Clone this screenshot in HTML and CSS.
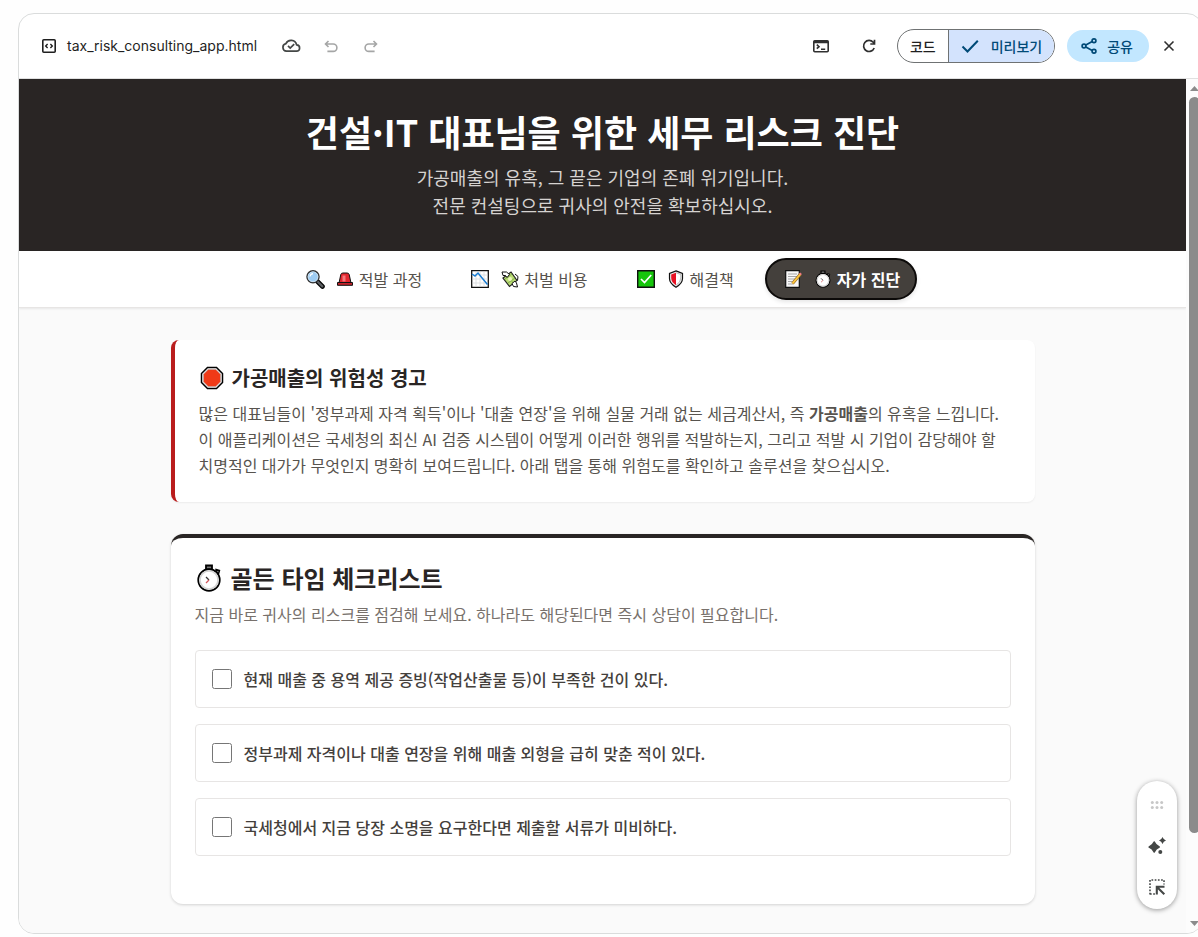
FILE: index.html
```html
<!DOCTYPE html>
<html lang="ko">
<head>
<meta charset="utf-8">
<title>tax_risk_consulting_app.html</title>
<link rel="stylesheet" href="styles.css">
</head>
<body>
<svg class="defs" aria-hidden="true">
  <symbol id="stopwatch" viewBox="0 0 24 28">
    <path d="M9 1.500h6v4H9z" fill="#777" stroke="#000" stroke-width="1.800"/>
    <path d="M19 5.500l3.500 1-1 3.500-2.500-2z" fill="#777" stroke="#000" stroke-width="1.400"/>
    <circle cx="12" cy="16" r="10.800" fill="#f4f4f4" stroke="#000" stroke-width="1.700"/>
    <circle cx="12" cy="16" r="9" fill="#fff" stroke="#d4d4d4" stroke-width="1.600"/>
    <path d="M9 13l3 3" fill="none" stroke="#333" stroke-width="1.300"/>
    <path d="M12 16l-3 3" fill="none" stroke="#d2585e" stroke-width="1.200"/>
  </symbol>
</svg>
<div class="frame">
  <div class="toolbar">
    <div class="toolbar-group">
      <svg class="icon-16 file-icon" viewBox="0 0 16 16" fill="none" stroke="#1f1f1f" stroke-width="1.600"><rect x="1.800" y="1.800" width="12.400" height="12.400" rx="1"/><path d="M6.600 6L4.700 8l1.900 2M9.400 6l1.900 2-1.900 2" stroke-width="1.400"/></svg>
      <span class="filename">tax_risk_consulting_app.html</span>
      <svg class="cloud" viewBox="0 0 20 16" fill="none" stroke="#444746" stroke-width="1.700"><path d="M5.500 13.200h9.700a3.200 3.200 0 0 0 .4-6.400A5.700 5.700 0 0 0 4.900 5.700a3.800 3.800 0 0 0 .6 7.500z"/><path d="M7 7.900l2.200 2.200 4-4"/></svg>
      <button class="icon-button" aria-label="실행취소" disabled><svg class="icon-16" viewBox="0 0 16 16" fill="none" stroke="#a5a6a6" stroke-width="1.600"><path d="M5.500 3L2.500 6l3 3M2.800 6h7.400a3.700 3.700 0 0 1 0 7.400H4.400"/></svg></button>
      <button class="icon-button" aria-label="다시실행" disabled><svg class="icon-16" viewBox="0 0 16 16" fill="none" stroke="#a5a6a6" stroke-width="1.600"><path d="M10.500 3l3 3-3 3M13.200 6H5.800a3.700 3.700 0 0 0 0 7.400h5.800"/></svg></button>
    </div>
    <div class="toolbar-group actions">
      <button class="icon-button" aria-label="콘솔"><svg class="icon-18" viewBox="0 0 18 18" fill="none" stroke="#303030" stroke-width="1.600"><rect x="1.800" y="3.800" width="14.400" height="11" rx="1"/><path d="M1.800 5h14.400" stroke-width="2.400"/><path d="M4.800 7.700l2.200 2-2.200 2M9 12.200h4.200"/></svg></button>
      <button class="icon-button" aria-label="새로고침"><svg class="icon-18" viewBox="0 0 18 18" fill="none" stroke="#303030" stroke-width="1.700"><path d="M14.200 11a5.500 5.500 0 1 1-1-5.700l1.600 1.700M14.500 2.800V7h-4.200"/></svg></button>
      <div class="segment">
        <button class="segment-button">코드</button>
        <button class="segment-button selected"><svg class="check" viewBox="0 0 18 14" fill="none" stroke="#004a77" stroke-width="2"><path d="M1.500 7.500l5 5L16.800 1.800"/></svg>미리보기</button>
      </div>
      <button class="share"><svg class="icon-18" viewBox="0 0 18 18" fill="none" stroke="#004a77" stroke-width="1.700"><circle cx="14" cy="3.700" r="1.900"/><circle cx="14" cy="14.300" r="1.900"/><circle cx="4" cy="9" r="1.900"/><path d="M5.800 8l6.400-3.400M5.800 10l6.400 3.400"/></svg>공유</button>
      <button class="icon-button close" aria-label="닫기"><svg class="icon-16" viewBox="0 0 16 16" stroke="#303030" stroke-width="1.600"><path d="M3.500 3.500l9 9M12.500 3.500l-9 9"/></svg></button>
    </div>
  </div>
  <div class="viewport">
    <div class="page">
      <header class="hero">
        <h1>건설·IT 대표님을 위한 세무 리스크 진단</h1>
        <p>가공매출의 유혹, 그 끝은 기업의 존폐 위기입니다.<br>전문 컨설팅으로 귀사의 안전을 확보하십시오.</p>
      </header>
      <nav class="tabs">
        <button class="tab">
          <svg class="emoji" viewBox="0 0 20 20"><path d="M12.500 12.500l5 5" stroke="#000" stroke-width="4.600" stroke-linecap="round"/><path d="M13 13l4.300 4.300" stroke="#5c5f63" stroke-width="2.400" stroke-linecap="round"/><circle cx="8" cy="7.800" r="6" fill="#9dccf3" stroke="#333" stroke-width="1.500"/><circle cx="8" cy="7.800" r="4.900" fill="#9dccf3" stroke="#c9dff0" stroke-width="1"/><path d="M5 7.500A3.500 3.500 0 0 1 8 4.600" fill="none" stroke="#fff" stroke-width="1.200"/></svg>
          <span class="tab-label"><svg class="emoji-small" viewBox="0 0 18 18"><path d="M3 13l1.800-8.500Q5.200 3 7 3h4q1.800 0 2.200 1.500L15 13z" fill="#e3262f" stroke="#111" stroke-width="1"/><path d="M6.500 5.500h3v6h-3z" fill="#f4777b"/><path d="M1.500 12.500h15v2.800h-15z" fill="#c4222a" stroke="#111" stroke-width="1"/></svg>적발 과정</span>
        </button>
        <button class="tab">
          <svg class="emoji" viewBox="0 0 20 20"><path d="M1.700 1.700h16.600v16.600H1.700z" fill="#fff" stroke="#111" stroke-width="1.300"/><path d="M6 2.500v15M10 2.500v15M14 2.500v15M2.500 6h15M2.500 10h15M2.500 14h15" stroke="#d5d9dd" stroke-width=".8"/><path d="M2 5l3 2 3-3 9.500 11.500" fill="none" stroke="#187bd1" stroke-width="1.500"/></svg>
          <span class="tab-label"><svg class="emoji-small" viewBox="0 0 18 18"><path d="M2 8L10 2l6 8.500-7.500 6z" fill="#b9dc73" stroke="#222" stroke-width="1.200"/><path d="M6 5l6.500 8.500M4 9l7-5M7 13l7-5" stroke="#7fa648" stroke-width=".9"/><circle cx="9" cy="9" r="2" fill="#edf7bd"/><path d="M1 2h4.500l3 2.500L6 7.500 4.500 5.500H2zM16.500 17l-4-.5-1.500-3 3-2.500 1.500 2zM14 4l3 2.500-.5 4" fill="#fff" stroke="#111" stroke-width="1"/></svg>처벌 비용</span>
        </button>
        <button class="tab">
          <svg class="emoji" viewBox="0 0 20 20"><path d="M1.700 1.700h16.600v16.600H1.700z" fill="#16c60c" stroke="#111" stroke-width="1.400"/><path d="M5 10l3.500 3.500L15.200 6" fill="none" stroke="#fff" stroke-width="1.700"/></svg>
          <span class="tab-label"><svg class="emoji-small" viewBox="0 0 18 18"><path d="M9 .9l6.500 2.600v5q0 5-6.500 8.700-6.500-3.700-6.500-8.700v-5z" fill="#eee" stroke="#111" stroke-width="1.200"/><path d="M9 2.700v12.500Q4.200 12.200 4.200 8V4.500z" fill="#e81224"/><path d="M9 2.700l4.800 1.800V8q0 4.200-4.800 7.200" fill="#fff" stroke="#aaa" stroke-width=".8"/></svg>해결책</span>
        </button>
        <button class="tab active">
          <svg class="emoji" viewBox="0 0 20 20"><path d="M2.700 1.700h13.600v16.600H2.700z" fill="#f8f8f8" stroke="#111" stroke-width="1.200"/><path d="M5 5h9M5 7.500h9M5 10h7M5 12.500h4M5 15h5" stroke="#a5a5a5" stroke-width="1"/><path d="M9.500 14.500L17.500 5" stroke="#916727" stroke-width="3"/><path d="M9.500 14.500L17.500 5" stroke="#ffc83d" stroke-width="1.900"/><path d="M16.800 5.500l1.200-1.300" stroke="#f37b83" stroke-width="2.300"/></svg>
          <span class="tab-label"><svg class="emoji-small"><use href="#stopwatch"/></svg>자가 진단</span>
        </button>
      </nav>
      <main class="content">
        <section class="card warning">
          <h2><svg class="stop" viewBox="0 0 26 26"><path d="M8.500 2.500h9l6 6v9l-6 6h-9l-6-6v-9z" fill="#fff" stroke="#000" stroke-width="1.500"/><path d="M9.200 4.300h7.600l4.900 4.900v7.600l-4.900 4.900H9.200l-4.900-4.900V9.200z" fill="#f03a17" stroke="#bcbcbc" stroke-width=".8"/></svg>가공매출의 위험성 경고</h2>
          <p>많은 대표님들이 '정부과제 자격 획득'이나 '대출 연장'을 위해 실물 거래 없는 세금계산서, 즉 <strong>가공매출</strong>의 유혹을 느낍니다. 이 애플리케이션은 국세청의 최신 AI 검증 시스템이 어떻게 이러한 행위를 적발하는지, 그리고 적발 시 기업이 감당해야 할 치명적인 대가가 무엇인지 명확히 보여드립니다. 아래 탭을 통해 위험도를 확인하고 솔루션을 찾으십시오.</p>
        </section>
        <section class="card checklist">
          <h2><svg class="watch"><use href="#stopwatch"/></svg>골든 타임 체크리스트</h2>
          <p>지금 바로 귀사의 리스크를 점검해 보세요. 하나라도 해당된다면 즉시 상담이 필요합니다.</p>
          <div class="questions">
            <label class="question"><input type="checkbox"><span>현재 매출 중 용역 제공 증빙(작업산출물 등)이 부족한 건이 있다.</span></label>
            <label class="question"><input type="checkbox"><span>정부과제 자격이나 대출 연장을 위해 매출 외형을 급히 맞춘 적이 있다.</span></label>
            <label class="question"><input type="checkbox"><span>국세청에서 지금 당장 소명을 요구한다면 제출할 서류가 미비하다.</span></label>
          </div>
        </section>
      </main>
    </div>
    <div class="scrollbar" aria-hidden="true">
      <svg class="arrow" viewBox="0 0 9 5"><path d="M0 5L4.500 0 9 5z" fill="#8b8b8b"/></svg>
      <div class="track"><div class="thumb"></div></div>
      <svg class="arrow" viewBox="0 0 9 5"><path d="M0 0l4.500 5L9 0z" fill="#8b8b8b"/></svg>
    </div>
    <div class="floating">
      <button class="icon-button" aria-label="이동"><svg class="icon-18" viewBox="0 0 18 18" fill="#c7c7c7"><circle cx="4.300" cy="6.500" r="1.500"/><circle cx="9" cy="6.500" r="1.500"/><circle cx="13.700" cy="6.500" r="1.500"/><circle cx="4.300" cy="11.500" r="1.500"/><circle cx="9" cy="11.500" r="1.500"/><circle cx="13.700" cy="11.500" r="1.500"/></svg></button>
      <button class="icon-button" aria-label="AI 기능"><svg class="icon-18" viewBox="0 0 18 18" fill="#444746"><path d="M6.200 5q1.500 3.500 5 5-3.500 1.500-5 5-1.500-3.500-5-5 3.500-1.500 5-5z" stroke="#444746" stroke-width="1.600" stroke-linejoin="round"/><path d="M14.500 0q.9 2.600 3.500 3.500-2.600.9-3.500 3.500-.9-2.600-3.500-3.500 2.600-.9 3.500-3.500z"/><circle cx="12.300" cy="15" r="2"/></svg></button>
      <button class="icon-button" aria-label="선택"><svg class="icon-18" viewBox="0 0 18 18" fill="none" stroke="#444746"><path d="M2 16.500V2h14v4.500M2 16h5" stroke-width="1.600" stroke-dasharray="1.700 1.500"/><path d="M8.800 16.500V8.800h7.700M9.500 9.500l6.800 6.800" stroke-width="2.100"/></svg></button>
    </div>
  </div>
</div>
</body>
</html>
```
FILE: styles.css
```css
* {
  box-sizing: border-box;
}

body {
  margin: 0;
  height: 100vh;
  overflow: hidden;
  padding: 13px 0 3px 18px;
  background: #fefefe;
  font-family: "Noto Sans CJK KR", sans-serif;
  font-size: 16px;
  line-height: 24px;
}

button {
  margin: 0;
  border: 0;
  padding: 0;
  background: none;
  color: inherit;
  font: inherit;
}

h1,
h2,
p {
  margin: 0;
}

svg {
  display: block;
  flex: none;
}

.defs {
  position: absolute;
  width: 0;
  height: 0;
}

.frame {
  display: flex;
  flex-direction: column;
  height: 100%;
  margin-right: -5px;
  overflow: hidden;
  border: 1px solid #dadcdc;
  border-radius: 16px;
  background: #fff;
}

/* Toolbar */
.toolbar {
  display: flex;
  flex: none;
  align-items: center;
  justify-content: space-between;
  height: 65px;
  padding: 0 21px 0 22px;
  border-bottom: 1px solid #e0e0e0;
}

.toolbar-group {
  display: flex;
  align-items: center;
}

.icon-16 {
  width: 16px;
  height: 16px;
}

.icon-18 {
  width: 18px;
  height: 18px;
}

.icon-button {
  display: grid;
  place-items: center;
  width: 24px;
  height: 24px;
}

.filename {
  margin: 0 24px 0 10px;
  color: #1f1f1f;
  font-family: Inter, sans-serif;
  font-size: 14px;
}

.cloud {
  width: 20px;
  height: 16px;
  margin-right: 18px;
}

.cloud ~ .icon-button {
  margin-right: 16px;
}

.actions > .icon-button:not(.close) {
  margin-right: 24px;
}

.actions > .icon-button + .icon-button:not(.close) {
  margin-right: 16px;
}

.segment {
  display: flex;
  height: 34px;
  margin-right: 12px;
  overflow: hidden;
  border: 1px solid #6f7273;
  border-radius: 17px;
  color: #1f1f1f;
  font-size: 14px;
  font-weight: 500;
}

.segment-button {
  display: flex;
  align-items: center;
  gap: 12px;
  padding: 0 12px;
}

.segment-button.selected {
  border-left: 1px solid #6f7273;
  background: #d3e3fd;
  color: #004a77;
}

.check {
  width: 18px;
  height: 14px;
}

.share {
  display: flex;
  align-items: center;
  gap: 9px;
  height: 32px;
  margin-right: 8px;
  padding: 0 16px 0 13px;
  border-radius: 16px;
  background: #c2e7ff;
  color: #004a77;
  font-size: 14px;
  font-weight: 500;
}

/* Previewed page */
.viewport {
  position: relative;
  display: flex;
  flex: 1;
  min-height: 0;
}

.page {
  flex: 1;
  overflow: hidden;
  background: #fafafa;
}

.hero {
  padding: 32px 16px;
  background: #292524;
  color: #fff;
  text-align: center;
}

.hero h1 {
  margin-bottom: 12px;
  font-size: 36px;
  font-weight: 700;
  line-height: 40px;
}

.hero p {
  color: #d6d3d1;
  font-size: 18px;
  line-height: 28px;
}

.tabs {
  display: flex;
  align-items: center;
  justify-content: center;
  gap: 15px;
  height: 57px;
  border-bottom: 1px solid #e7e5e4;
  background: #fff;
  box-shadow: 0 1px 2px rgba(0, 0, 0, 0.08);
}

.tab {
  display: flex;
  align-items: center;
  gap: 11px;
  height: 42px;
  padding: 0 16px 0 17px;
  border-radius: 21px;
  color: #57534e;
}

.tab.active {
  padding: 0 15px 0 16px;
  border: 2px solid #0c0a09;
  background: #44403c;
  box-shadow: 0 2px 4px rgba(0, 0, 0, 0.1);
  color: #fff;
  font-weight: 700;
}

.tab-label {
  display: flex;
  align-items: center;
  gap: 5px;
}

.emoji {
  width: 20px;
  height: 20px;
}

.emoji-small {
  width: 18px;
  height: 18px;
}

.content {
  display: flex;
  flex-direction: column;
  gap: 32px;
  max-width: 896px;
  margin: 0 auto;
  padding: 32px 16px;
}

.card {
  padding: 24px;
  border-radius: 8px;
  background: #fff;
  box-shadow: 0 1px 2px rgba(0, 0, 0, 0.06);
}

.card h2 {
  display: flex;
  align-items: center;
  margin-bottom: 8px;
  color: #292524;
  font-weight: 700;
}

.warning {
  border-left: 4px solid #b91c1c;
}

.warning h2 {
  gap: 7px;
  font-size: 20px;
  line-height: 28px;
}

.warning p {
  color: #57534e;
  line-height: 26px;
}

.stop {
  width: 26px;
  height: 26px;
}

.checklist {
  border-top: 4px solid #292524;
  border-radius: 12px;
  padding-bottom: 48px;
  box-shadow: 0 1px 3px rgba(0, 0, 0, 0.16);
}

.checklist h2 {
  gap: 8px;
  font-size: 24px;
  line-height: 32px;
}

.checklist p {
  color: #78716c;
}

.watch {
  width: 28px;
  height: 28px;
}

.questions {
  display: grid;
  gap: 16px;
  margin-top: 24px;
}

.question {
  display: flex;
  align-items: center;
  gap: 12px;
  padding: 16px;
  border: 1px solid #e7e5e4;
  border-radius: 4px;
  color: #44403c;
  font-weight: 500;
}

.question input {
  width: 20px;
  height: 20px;
  margin: 0;
}

/* Scroll bar and floating tools */
.scrollbar {
  display: flex;
  flex: none;
  flex-direction: column;
  align-items: center;
  gap: 6px;
  width: 16px;
  padding: 7px 0;
  background: #fcfcfc;
}

.arrow {
  width: 9px;
  height: 5px;
}

.track {
  flex: 1;
}

.thumb {
  width: 11px;
  height: 90%;
  border-radius: 6px;
  background: #8b8b8b;
}

.floating {
  position: absolute;
  right: 25px;
  bottom: 24px;
  display: grid;
  gap: 17px;
  padding: 12px 8px 10px;
  border-radius: 20px;
  background: #fff;
  box-shadow: 0 1px 5px rgba(0, 0, 0, 0.4);
}
```
